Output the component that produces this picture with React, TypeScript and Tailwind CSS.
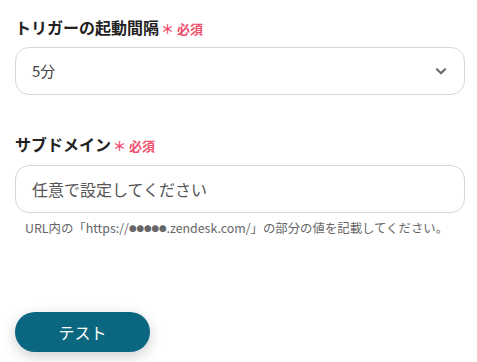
export default function App() {
  return (
    <div
      className="w-[477px] h-[362px] bg-white pt-[16px] pl-[15px] overflow-hidden"
      style={{ fontFamily: '"Noto Sans CJK JP", "Noto Sans", sans-serif' }}
    >
      <div className="w-[450px]">
        <div className="flex items-center gap-[2px] h-[22px]">
          <span className="text-[16px] font-bold text-[#222]">トリガーの起動間隔</span>
          <span className="text-[13px] font-bold text-[#f0506e] mt-[3px]">＊ 必須</span>
        </div>
        <div className="mt-[9px] h-[48px] rounded-[14px] border border-[#d3d6dc] flex items-center justify-between pl-[16px] pr-[16px]">
          <span className="text-[15px] text-[#444]">5分</span>
          <svg width="14" height="14" viewBox="0 0 24 24" fill="none" stroke="#666" strokeWidth="3.5" strokeLinecap="round" strokeLinejoin="round">
            <path d="M5 9l7 7 7-7" />
          </svg>
        </div>

        <div className="mt-[38px] flex items-center gap-[2px] h-[22px]">
          <span className="text-[16px] font-bold text-[#222]">サブドメイン</span>
          <span className="text-[13px] font-bold text-[#f0506e] mt-[3px]">＊ 必須</span>
        </div>
        <div className="mt-[10px] h-[48px] rounded-[14px] border border-[#d3d6dc] flex items-center pl-[16px]">
          <span className="text-[16px] text-[#555]">任意で設定してください</span>
        </div>
        <p className="mt-[6px] pl-[10px] text-[12.4px] text-[#666]">
          URL内の「https://<span className="text-[7.5px] align-[1px]">●●●●●</span>.zendesk.com/」の部分の値を記載してください。
        </p>

        <div className="mt-[74px]">
          <button className="w-[135px] h-[40px] rounded-full bg-[#0b6780] text-white text-[16px] shadow-[0_4px_14px_rgba(0,0,0,0.2)]">
            テスト
          </button>
        </div>
      </div>
    </div>
  );
}
